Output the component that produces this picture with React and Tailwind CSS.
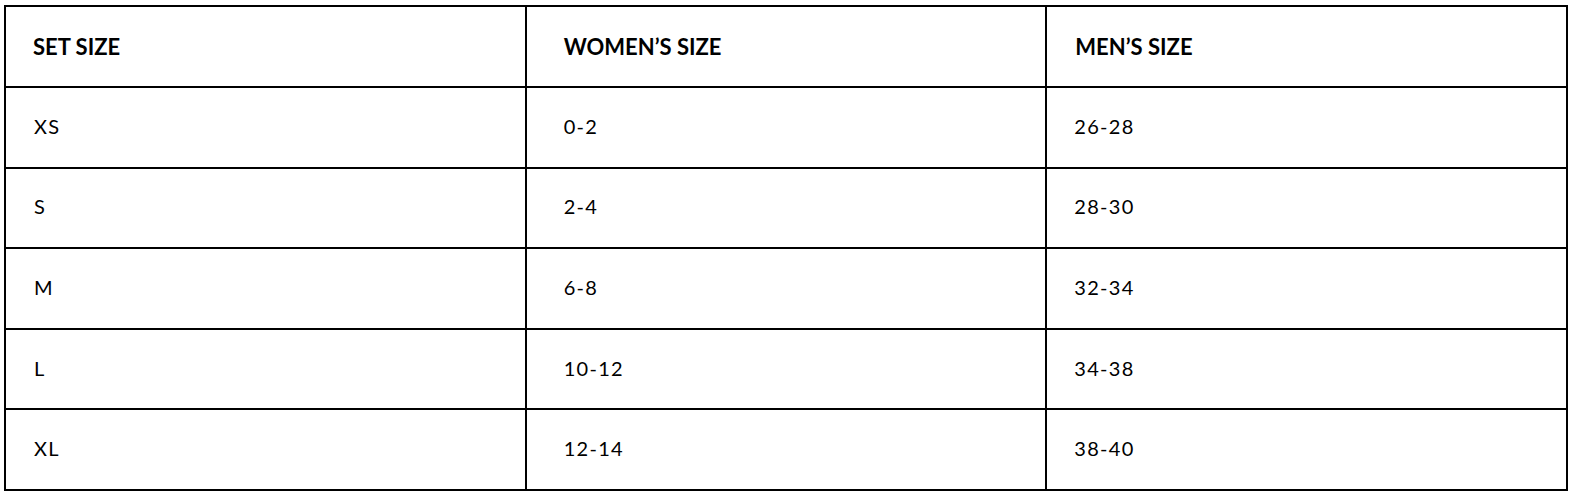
export default function App() {
  const rows = [
    ["XS", "0-2", "26-28"],
    ["S", "2-4", "28-30"],
    ["M", "6-8", "32-34"],
    ["L", "10-12", "34-38"],
    ["XL", "12-14", "38-40"],
  ];
  const font = { fontFamily: "Lato, 'Liberation Sans', sans-serif" };
  return (
    <div className="bg-white w-[1571px] h-[498px] pl-[4px] pr-[3px] pt-[5px]" style={font}>
      <table className="w-full border-collapse border-2 border-black table-fixed text-black">
        <thead>
          <tr className="h-[81px]">
            <th className="w-1/3 border-2 border-black text-left font-bold text-[22px] pl-[27px]">SET SIZE</th>
            <th className="w-1/3 border-2 border-black text-left font-bold text-[22px] pl-[37px]">WOMEN’S SIZE</th>
            <th className="w-1/3 border-2 border-black text-left font-bold text-[22px] pl-[28px]">MEN’S SIZE</th>
          </tr>
        </thead>
        <tbody>
          {rows.map((r, i) => (
            <tr key={i} className="h-[80.6px]">
              <td className="border-2 border-black text-[20px] tracking-[1.3px] pl-[28px] pb-[3px]">{r[0]}</td>
              <td className="border-2 border-black text-[20px] tracking-[1.3px] pl-[37px] pb-[3px]">{r[1]}</td>
              <td className="border-2 border-black text-[20px] tracking-[1.3px] pl-[27px] pb-[3px]">{r[2]}</td>
            </tr>
          ))}
        </tbody>
      </table>
    </div>
  );
}
